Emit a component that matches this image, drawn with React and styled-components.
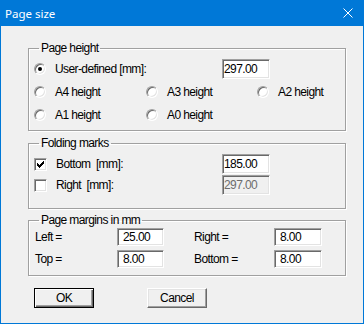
import React from 'react'
import styled, { createGlobalStyle, css } from 'styled-components'

const GlobalStyle = createGlobalStyle`
  html, body {
    margin: 0;
    padding: 0;
    background: #f0f0f0;
  }
  * {
    box-sizing: border-box;
  }
`

const Window = styled.div`
  width: 364px;
  height: 324px;
  border: 1px solid #0078d7;
  border-top: none;
  background: #f0f0f0;
  display: flex;
  flex-direction: column;
  font-family: "Liberation Sans", Arial, sans-serif;
  font-size: 12px;
  letter-spacing: -0.6px;
  color: #000;
`

const TitleBar = styled.div`
  height: 26px;
  margin: 0 -1px;
  padding: 0 11px 0 5px;
  background: #0078d7;
  color: #fff;
  display: flex;
  align-items: center;
  justify-content: space-between;
  font-family: "Noto Sans", "Open Sans", sans-serif;
  font-size: 11.5px;
  letter-spacing: 0;
`

const Body = styled.div`
  flex: 1;
  padding: 15px 0 0 27px;
`

const Group = styled.fieldset`
  width: 318px;
  margin: ${(p) => p.$top || 0}px 0 0;
  padding: 0 5px ${(p) => p.$bottom}px;
  border: 1px solid #a0a0a0;
  box-shadow: inset 1px 1px #fff, 1px 1px #fff;
  min-width: 0;
`

const Caption = styled.legend`
  margin-left: 5px;
  padding: 0 2px;
  line-height: 14px;
`

const Stack = styled.div`
  display: flex;
  flex-direction: column;
  gap: ${(p) => p.$gap}px;
  padding-top: ${(p) => p.$top}px;
`

const Row = styled.div`
  display: flex;
  align-items: center;
  height: ${(p) => p.$h || 20}px;
`

const Option = styled.label`
  display: flex;
  align-items: center;
  gap: 9px;
  width: ${(p) => (p.$w ? `${p.$w}px` : 'auto')};
  flex: none;
`

const sunken = css`
  border: 1px solid;
  border-color: #a0a0a0 #fff #fff #a0a0a0;
  box-shadow: inset 1px 1px #696969, inset -1px -1px #e3e3e3;
`

const Radio = styled.span`
  ${sunken}
  position: relative;
  flex: none;
  width: 12px;
  height: 12px;
  border-radius: 50%;
  background: #fff;

  &::after {
    content: '';
    display: ${(p) => (p.$on ? 'block' : 'none')};
    position: absolute;
    left: 3px;
    top: 3px;
    width: 4px;
    height: 4px;
    border-radius: 50%;
    background: #000;
  }
`

const Check = styled.span`
  ${sunken}
  flex: none;
  width: 13px;
  height: 13px;
  background: #fff;
  display: flex;
  align-items: center;
  justify-content: center;
`

const Field = styled.input`
  ${sunken}
  width: ${(p) => p.$w}px;
  height: ${(p) => p.$h || 20}px;
  margin: 0;
  padding: 0 0 0 ${(p) => p.$pad || 1}px;
  background: ${(p) => (p.readOnly ? '#f0f0f0' : '#fff')};
  color: ${(p) => (p.readOnly ? '#6d6d6d' : '#000')};
  font: inherit;
  letter-spacing: inherit;
  outline: none;
  flex: none;
`

const Label = styled.span`
  width: ${(p) => p.$w}px;
  margin-left: ${(p) => p.$ml || 0}px;
  padding-left: 1px;
  flex: none;
`

const Buttons = styled.div`
  display: flex;
  gap: 53px;
  margin-top: 12px;
  padding-left: 6px;
`

const Button = styled.button`
  width: 60px;
  height: 20px;
  padding: 0;
  background: #f0f0f0;
  color: #000;
  font: inherit;
  letter-spacing: inherit;
  border: 1px solid;
  border-color: #fff #696969 #696969 #fff;
  box-shadow: inset -1px -1px #a0a0a0, inset 1px 1px #e3e3e3;

  ${(p) =>
    p.$default &&
    css`
      border-color: #000;
      box-shadow: inset 1px 1px #fff, inset -1px -1px #696969, inset -2px -2px #a0a0a0;
    `}
`

const CloseIcon = () => (
  <svg width="10" height="10" viewBox="0 0 10 10">
    <path d="M0.5 0.5 L9.5 9.5 M9.5 0.5 L0.5 9.5" stroke="#fff" strokeWidth="1" />
  </svg>
)

const CheckMark = () => (
  <svg width="7" height="7" viewBox="0 0 7 7">
    <path
      d="M0 2h1v3h-1z M1 3h1v3h-1z M2 4h1v3h-1z M3 3h1v3h-1z M4 2h1v3h-1z M5 1h1v3h-1z M6 0h1v3h-1z"
      fill="#000"
    />
  </svg>
)

const RadioOption = ({ w, on, children }) => (
  <Option $w={w}>
    <Radio $on={on} />
    {children}
  </Option>
)

const CheckOption = ({ w, on, children }) => (
  <Option $w={w}>
    <Check>{on && <CheckMark />}</Check>
    {children}
  </Option>
)

export default function App() {
  return (
    <>
      <GlobalStyle />
      <Window>
        <TitleBar>
          <span>Page size</span>
          <CloseIcon />
        </TitleBar>
        <Body>
          <Group $bottom={5}>
            <Caption>Page height</Caption>
            <Stack $gap={3} $top={4}>
              <Row>
                <RadioOption w={188} on>
                  User-defined [mm]:
                </RadioOption>
                <Field $w={48} defaultValue="297.00" />
              </Row>
              <Row>
                <RadioOption w={112}>A4 height</RadioOption>
                <RadioOption w={111}>A3 height</RadioOption>
                <RadioOption>A2 height</RadioOption>
              </Row>
              <Row>
                <RadioOption w={112}>A1 height</RadioOption>
                <RadioOption w={111}>A0 height</RadioOption>
              </Row>
            </Stack>
          </Group>

          <Group $top={5} $bottom={13}>
            <Caption>Folding marks</Caption>
            <Stack $gap={1} $top={4}>
              <Row>
                <CheckOption w={188} on>
                  Bottom&nbsp; [mm]:
                </CheckOption>
                <Field $w={48} defaultValue="185.00" />
              </Row>
              <Row>
                <CheckOption w={188}>Right&nbsp; [mm]:</CheckOption>
                <Field $w={48} defaultValue="297.00" readOnly />
              </Row>
            </Stack>
          </Group>

          <Group $top={4} $bottom={7}>
            <Caption>Page margins in mm</Caption>
            <Stack $gap={4} $top={1}>
              <Row $h={18}>
                <Label $w={83}>Left =</Label>
                <Field $w={47} $h={18} $pad={5} defaultValue="25.00" />
                <Label $w={81} $ml={29}>Right =</Label>
                <Field $w={48} $h={18} $pad={5} defaultValue="8.00" />
              </Row>
              <Row $h={18}>
                <Label $w={83}>Top =</Label>
                <Field $w={47} $h={18} $pad={5} defaultValue="8.00" />
                <Label $w={81} $ml={29}>Bottom =</Label>
                <Field $w={48} $h={18} $pad={5} defaultValue="8.00" />
              </Row>
            </Stack>
          </Group>

          <Buttons>
            <Button $default>OK</Button>
            <Button>Cancel</Button>
          </Buttons>
        </Body>
      </Window>
    </>
  )
}
